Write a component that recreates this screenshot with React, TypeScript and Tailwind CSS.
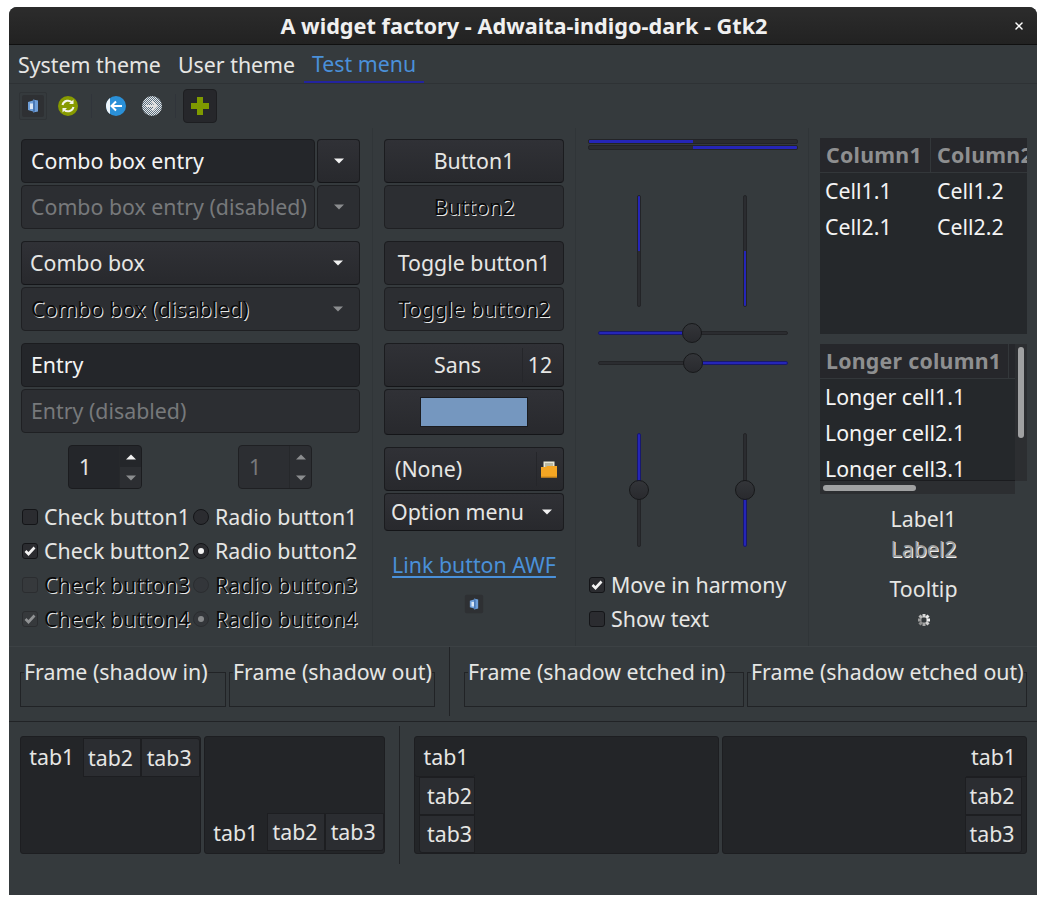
import React from "react";
import { X } from "lucide-react";

const widget =
  "rounded-[4px] border border-[#1b1c1f] border-b-[#141518] bg-linear-to-b from-[#303136] to-[#28292d]";
const widgetOff = "rounded-[4px] border border-[#1f2023] bg-[#2c2e32]";
const embossed = "text-[#0a0a0a] [text-shadow:1px_1px_0_#e8e8e8]";
const blueTrack = "border border-[#18186e] bg-[#2525b8]";
const darkTrack = "border border-[#232427] bg-[#2b2c30]";

function Caret({ off }: { off?: boolean }) {
  return (
    <svg width="10" height="6" viewBox="0 0 10 6">
      <path d="M0 0.500h10L5 5.500z" fill={off ? "#8b8d8f" : "#f2f2f2"} />
    </svg>
  );
}

function DocIcon({ box }: { box: number }) {
  return (
    <svg width={box} height={box} viewBox="0 0 24 24">
      <rect x="1" y="1" width="22" height="22" rx="2" fill="#2e3033" />
      <path d="M7 8l5-1.500v-1l5 1v11l-5 1v-1l-5-1.500z" fill="#6f9fd8" />
      <path d="M9 9.500h3v5.500h-3z" fill="#dbe7f5" />
      <path d="M12 6v12l2-0.500v-11z" fill="#4a78b4" />
    </svg>
  );
}

function Folder() {
  return (
    <svg width="16" height="17" viewBox="0 0 16 17">
      <rect x="2.500" y="0.500" width="11" height="10" fill="#e9e7d4" />
      <path d="M4 3h8M4 5h8" stroke="#8a8a70" strokeWidth="1" />
      <path d="M0 6h5l1-1h10v11.500H0z" fill="#f5a623" />
      <rect x="0" y="15.500" width="16" height="1" fill="#c9841a" />
    </svg>
  );
}

function Check({ on, off, label }: { on?: boolean; off?: boolean; label: string }) {
  return (
    <div className="flex h-[34px] items-center">
      <span
        className={`ml-px mr-[6px] flex h-4 w-4 shrink-0 items-center justify-center rounded-[3px] border ${
          off ? "border-[#2b2d30] bg-[#36393c]" : "border-[#141518] bg-[#2b2c30]"
        }`}
      >
        {on && (
          <svg width="12" height="10" viewBox="0 0 12 10">
            <path
              d="M1.500 5l3 3 6-6.500"
              fill="none"
              stroke={off ? "#909294" : "#f4f4f4"}
              strokeWidth="2.600"
            />
          </svg>
        )}
      </span>
      <span className={off ? embossed : ""}>{label}</span>
    </div>
  );
}

function Radio({ on, off, label }: { on?: boolean; off?: boolean; label: string }) {
  return (
    <div className="flex h-[34px] items-center">
      <span
        className={`mr-[6px] flex h-4 w-4 shrink-0 items-center justify-center rounded-full border ${
          off ? "border-[#2b2d30] bg-[#33363a]" : "border-[#141518] bg-[#2b2c30]"
        }`}
      >
        {on && <span className={`h-[6px] w-[6px] rounded-full ${off ? "bg-[#86888a]" : "bg-[#f4f4f4]"}`} />}
      </span>
      <span className={off ? embossed : ""}>{label}</span>
    </div>
  );
}

function Spin({ off }: { off?: boolean }) {
  return (
    <div className={`flex h-[44px] w-[74px] overflow-hidden ${off ? widgetOff : "rounded-[4px] border border-[#1b1c1f] bg-[#24262a]"}`}>
      <div className={`flex flex-1 items-center pl-[10px] ${off ? "text-[#77797b]" : ""}`}>1</div>
      <div className="flex w-[22px] flex-col border-l border-[#26282b]">
        <div className="flex h-[21px] items-center justify-center">
          <span className="rotate-180 leading-none">
            <Caret off={off} />
          </span>
        </div>
        <div className={`flex flex-1 items-center justify-center ${off ? "" : "bg-[#2c2e32]"}`}>
          <Caret off />
        </div>
      </div>
    </div>
  );
}

function Progress({ from, className }: { from: "start" | "end"; className: string }) {
  return (
    <div className={`flex overflow-hidden rounded-[2px] ${darkTrack} ${from === "end" ? "justify-end" : ""} ${className}`}>
      <div className="h-full w-1/2 bg-[#2525b8]" />
    </div>
  );
}

function VProgress({ from }: { from: "start" | "end" }) {
  return (
    <div className={`flex h-[112px] w-[4px] flex-col overflow-hidden rounded-[2px] ${darkTrack} ${from === "end" ? "justify-end" : ""}`}>
      <div className="h-[50%] bg-[#2525b8]" />
    </div>
  );
}

function Thumb({ className }: { className: string }) {
  return (
    <span className={`absolute h-5 w-5 rounded-full border border-[#17181a] bg-linear-to-b from-[#333539] to-[#292a2e] ${className}`} />
  );
}

function Frame({ label, className }: { label: string; className: string }) {
  return (
    <fieldset className={`h-[50px] border border-[#212326] ${className}`}>
      <legend className="ml-[3px] leading-[30px]">{label}</legend>
    </fieldset>
  );
}

function Tab({ label, className }: { label: string; className: string }) {
  return <div className={`flex items-center justify-center ${className}`}>{label}</div>;
}

const offTab = "border border-[#1d1e21] bg-[#2b2d31]";
const sheet = "h-[118px] rounded-[3px] border border-[#1d1e21] bg-[#232528]";

export default function App() {
  return (
    <div className="min-h-[905px] bg-white pl-[9px] pt-[7px] font-['Noto_Sans',sans-serif] text-[21.330px] leading-none text-[#e6e6e4]">
      <div className="flex h-[888px] w-[1028px] flex-col overflow-hidden rounded-t-[8px] bg-[#353a3d]">
        {/* Title bar */}
        <div className="relative flex h-[38px] shrink-0 items-center justify-center border-b border-[#101010] bg-linear-to-b from-[#2c2c2c] to-[#222222] pl-[2px] pt-px text-[21.700px] font-bold text-[#f0f0f0]">
          A widget factory - Adwaita-indigo-dark - Gtk2
          <X className="absolute right-[12px] top-[13px] h-[12px] w-[12px] text-white" strokeWidth={3} />
        </div>

        {/* Menu */}
        <div className="flex h-[39px] shrink-0 items-center border-b border-[#2e3235]">
          <div className="w-[161px] pl-[9px] pt-[2px]">System theme</div>
          <div className="w-[134px] pl-[8px] pt-[2px]">User theme</div>
          <div className="relative flex h-full w-[120px] items-center justify-center border-b-[2px] border-[#23239f] pt-[2px] text-[#4a90d9]">
            Test menu
          </div>
        </div>

        {/* Toolbar */}
        <div className="flex h-[44px] shrink-0 items-center pl-[10px]">
          <div className="flex h-[28px] w-[28px] items-center justify-center rounded-[2px] border border-[#2f3336]">
            <DocIcon box={24} />
          </div>
          <svg className="ml-[11px]" width="20" height="20" viewBox="0 0 20 20">
            <circle cx="10" cy="10" r="10" fill="#879a00" />
            <path d="M4.500 9a5.600 5.600 0 0 1 10-2M15.500 11a5.600 5.600 0 0 1-10 2" fill="none" stroke="#f4f4ea" strokeWidth="2" />
            <path d="M15.500 3.500v4.500h-4.500zM4.500 16.500v-4.500h4.500z" fill="#f4f4ea" />
          </svg>
          <div className="mx-[13px] h-[24px] w-px bg-[#30343a]" />
          <svg className="ml-px" width="20" height="20" viewBox="0 0 20 20">
            <circle cx="10" cy="10" r="10" fill="#2a90d8" />
            <path d="M0 10a10 10 0 0 1 4-8v16a10 10 0 0 1-4-8z" fill="#eef6fc" />
            <path d="M16 10H6M10 5.500L5.500 10l4.500 4.500" fill="none" stroke="#ffffff" strokeWidth="2" />
          </svg>
          <svg className="ml-[16px]" width="20" height="20" viewBox="0 0 20 20">
            <defs>
              <pattern id="dither" width="2" height="2" patternUnits="userSpaceOnUse">
                <rect width="2" height="2" fill="#5a6f80" />
                <rect width="1" height="1" fill="#e8e8e8" />
                <rect x="1" y="1" width="1" height="1" fill="#e8e8e8" />
              </pattern>
            </defs>
            <circle cx="10" cy="10" r="10" fill="url(#dither)" />
            <path d="M4 10h10M10 5.500l4.500 4.500-4.500 4.500" fill="none" stroke="#e0e0e0" strokeWidth="2" />
          </svg>
          <div className="mx-[13px] h-[24px] w-px bg-[#30343a]" />
          <div className="-ml-[6px] flex h-[34px] w-[34px] items-center justify-center rounded-[4px] border border-[#1d1e21] bg-[#26272b]">
            <svg width="18" height="18" viewBox="0 0 18 18">
              <path d="M6 0h6v6h6v6h-6v6H6v-6H0V6h6z" fill="#7f9a00" />
            </svg>
          </div>
        </div>

        {/* Main columns */}
        <div className="flex h-[518px] shrink-0">
          {/* Column 1 */}
          <div className="w-[364px] shrink-0 border-r border-[#303538] pl-[12px] pr-[12px] pt-[11px]">
            <div className="flex h-[44px] gap-[2px]">
              <div className="flex w-[294px] items-center rounded-[4px] border border-[#1b1c1f] bg-[#24262a] pl-[9px] text-[#f4f4f4]">
                Combo box entry
              </div>
              <div className={`flex w-[43px] items-center justify-center ${widget}`}>
                <Caret />
              </div>
            </div>
            <div className="mt-[2px] flex h-[44px] gap-[2px]">
              <div className={`flex w-[294px] items-center whitespace-nowrap pl-[9px] text-[#77797b] ${widgetOff}`}>
                Combo box entry (disabled)
              </div>
              <div className={`flex w-[43px] items-center justify-center ${widgetOff}`}>
                <Caret off />
              </div>
            </div>
            <div className={`mt-[12px] flex h-[44px] items-center justify-between pl-[8px] pr-[16px] ${widget}`}>
              Combo box
              <Caret />
            </div>
            <div className={`mt-[2px] flex h-[44px] items-center justify-between pl-[9px] pr-[16px] ${widgetOff}`}>
              <span className={embossed}>Combo box (disabled)</span>
              <Caret off />
            </div>
            <div className="mt-[12px] flex h-[44px] items-center rounded-[4px] border border-[#1b1c1f] bg-[#24262a] pl-[9px] text-[#f4f4f4]">
              Entry
            </div>
            <div className={`mt-[2px] flex h-[44px] items-center pl-[9px] text-[#77797b] ${widgetOff}`}>
              Entry (disabled)
            </div>
            <div className="mt-[12px] flex pl-[47px]">
              <Spin />
              <div className="ml-[96px]">
                <Spin off />
              </div>
            </div>
            <div className="mt-[11px] flex">
              <div className="w-[172px]">
                <Check label="Check button1" />
                <Check on label="Check button2" />
                <Check off label="Check button3" />
                <Check on off label="Check button4" />
              </div>
              <div>
                <Radio label="Radio button1" />
                <Radio on label="Radio button2" />
                <Radio off label="Radio button3" />
                <Radio on off label="Radio button4" />
              </div>
            </div>
          </div>

          {/* Column 2 */}
          <div className="w-[203px] shrink-0 border-r border-[#303538] pl-[11px] pr-[11px] pt-[11px]">
            <div className={`flex h-[44px] items-center justify-center ${widget}`}>Button1</div>
            <div className={`mt-[2px] flex h-[44px] items-center justify-center ${widgetOff}`}>
              <span className={embossed}>Button2</span>
            </div>
            <div className="mt-[12px] flex h-[44px] items-center justify-center rounded-[4px] border border-[#1b1c1f] bg-[#2a2b2f]">
              Toggle button1
            </div>
            <div className={`mt-[2px] flex h-[44px] items-center justify-center ${widgetOff}`}>
              <span className={embossed}>Toggle button2</span>
            </div>
            <div className={`mt-[12px] flex h-[44px] items-center ${widget}`}>
              <div className="flex-1 pl-[8px] text-center">Sans</div>
              <div className="flex h-[34px] w-[41px] items-center justify-center border-l border-[#25262a] pr-[6px]">12</div>
            </div>
            <div className={`mt-[2px] flex h-[46px] items-center justify-center ${widget}`}>
              <div className="h-[30px] w-[108px] border border-[#1b1c1f] bg-[#7597bf]" />
            </div>
            <div className={`mt-[12px] flex h-[44px] items-center ${widget}`}>
              <div className="flex-1 pl-[10px]">(None)</div>
              <div className="flex h-[34px] w-[27px] items-center justify-center border-l border-[#25262a] pr-[3px]">
                <Folder />
              </div>
            </div>
            <div className={`mt-[2px] flex h-[38px] items-center justify-between pl-[6px] pr-[11px] ${widget}`}>
              Option menu
              <Caret />
            </div>
            <div className="mt-[23px] text-center text-[#4a90d9] underline underline-offset-[3px]">Link button AWF</div>
            <div className="mt-[19px] flex justify-center">
              <DocIcon box={20} />
            </div>
          </div>

          {/* Column 3 */}
          <div className="w-[233px] shrink-0 border-r border-[#303538] pl-[12px] pr-[10px] pt-[11px]">
            <div className="flex flex-col gap-[1px]">
              <Progress from="start" className="h-[5px]" />
              <Progress from="end" className="h-[5px]" />
            </div>
            <div className="mt-[45px] flex h-[112px] gap-[102px] pl-[49px]">
              <VProgress from="start" />
              <VProgress from="end" />
            </div>
            <div className="mt-[11px] px-[10px]">
              <div className="relative flex h-[30px] items-center">
                <div className={`h-[4px] w-[94px] rounded-l-[2px] ${blueTrack}`} />
                <div className={`h-[4px] flex-1 rounded-r-[2px] ${darkTrack}`} />
                <Thumb className="left-[84px] top-[5px]" />
              </div>
              <div className="relative flex h-[30px] items-center">
                <div className={`h-[4px] w-[95px] rounded-l-[2px] ${darkTrack}`} />
                <div className={`h-[4px] flex-1 rounded-r-[2px] ${blueTrack}`} />
                <Thumb className="left-[85px] top-[5px]" />
              </div>
            </div>
            <div className="mt-[55px] flex h-[114px] gap-[102px] pl-[49px]">
              <div className="relative flex h-full w-[4px] flex-col">
                <div className={`h-[57px] rounded-t-[2px] ${blueTrack}`} />
                <div className={`flex-1 rounded-b-[2px] ${darkTrack}`} />
                <Thumb className="-left-[8px] top-[47px]" />
              </div>
              <div className="relative flex h-full w-[4px] flex-col">
                <div className={`h-[57px] rounded-t-[2px] ${darkTrack}`} />
                <div className={`flex-1 rounded-b-[2px] ${blueTrack}`} />
                <Thumb className="-left-[8px] top-[47px]" />
              </div>
            </div>
            <div className="mt-[21px]">
              <Check on label="Move in harmony" />
              <Check label="Show text" />
            </div>
          </div>

          {/* Column 4 */}
          <div className="min-w-0 flex-1 pl-[11px] pt-[10px]">
            <div className="h-[196px] w-[207px] overflow-hidden bg-[#25282b]">
              <div className="flex h-[35px] border-b border-[#33373a] bg-[#26272b] font-bold tracking-[0.25px] text-[#8e8f90]">
                <div className="flex w-[111px] shrink-0 items-center border-r border-[#33373a] pl-[6px]">Column1</div>
                <div className="flex items-center whitespace-nowrap pl-[6px]">Column2</div>
              </div>
              <div className="flex h-[36px] items-center text-[#f4f4f4]">
                <div className="w-[111px] pl-[5px]">Cell1.1</div>
                <div className="pl-[6px]">Cell1.2</div>
              </div>
              <div className="flex h-[36px] items-center text-[#f4f4f4]">
                <div className="w-[111px] pl-[5px]">Cell2.1</div>
                <div className="pl-[6px]">Cell2.2</div>
              </div>
            </div>

            <div className="mt-[10px] w-[207px]">
              <div className="flex h-[137px]">
                <div className="w-[195px] overflow-hidden border-b border-[#1b1c1f] bg-[#25282b]">
                  <div className="flex h-[35px] border-b border-[#33373a] bg-[#26272b] font-bold tracking-[0.25px] text-[#8e8f90]">
                    <div className="flex w-[189px] shrink-0 items-center border-r border-[#33373a] pl-[6px]">Longer column1</div>
                  </div>
                  <div className="flex h-[36px] items-center pl-[5px] text-[#f4f4f4]">Longer cell1.1</div>
                  <div className="flex h-[36px] items-center pl-[5px] text-[#f4f4f4]">Longer cell2.1</div>
                  <div className="flex h-[36px] items-center pl-[5px] text-[#f4f4f4]">Longer cell3.1</div>
                </div>
                <div className="w-[12px] bg-[#2c2e31] pl-[3px] pt-[3px]">
                  <div className="h-[91px] w-[6px] rounded-full bg-[#a0a1a2]" />
                </div>
              </div>
              <div className="h-[13px] w-[195px] bg-[#2c2e31] pl-[3px] pt-[4px]">
                <div className="h-[6px] w-[93px] rounded-full bg-[#a0a1a2]" />
              </div>
            </div>

            <div className="mt-[9px] flex w-[207px] flex-col items-center">
              <div className="flex h-[31px] items-center">Label1</div>
              <div className="flex h-[30px] items-center text-[#9b9c9c] [text-shadow:1px_1px_0_#f0f0f0]">Label2</div>
              <div className="mt-[10px] flex h-[30px] items-center">Tooltip</div>
              <svg className="mt-[9px]" width="14" height="14" viewBox="0 0 14 14">
                <g fill="none" strokeWidth="3">
                  <path d="M7 1v3.500" stroke="#d8d8d8" />
                  <path d="M11.500 2.500L9 5" stroke="#e8e8e8" />
                  <path d="M13 7H9.500" stroke="#f0f0f0" />
                  <path d="M11.500 11.500L9 9" stroke="#d0d0d0" />
                  <path d="M7 13V9.500" stroke="#a8a8a8" />
                  <path d="M2.500 11.500L5 9" stroke="#909090" />
                  <path d="M1 7h3.500" stroke="#9a9a9a" />
                  <path d="M2.500 2.500L5 5" stroke="#b8b8b8" />
                </g>
              </svg>
            </div>
          </div>
        </div>

        {/* Frames */}
        <div className="flex h-[76px] shrink-0 border-y border-t-[#3c4144] border-b-[#212326] pl-[11px]">
          <Frame label="Frame (shadow in)" className="mt-[10px] w-[206px]" />
          <Frame label="Frame (shadow out)" className="ml-[3px] mt-[10px] w-[206px]" />
          <div className="ml-[14px] h-[69px] w-px bg-[#212326]" />
          <Frame label="Frame (shadow etched in)" className="ml-[14px] mt-[10px] w-[280px]" />
          <Frame label="Frame (shadow etched out)" className="ml-[3px] mt-[10px] w-[280px]" />
        </div>

        {/* Notebooks */}
        <div className="flex flex-1 pl-[11px]">
          <div className={`mt-[14px] w-[181px] ${sheet}`}>
            <div className="flex">
              <Tab label="tab1" className="h-[39px] w-[62px] rounded-t-[3px]" />
              <Tab label="tab2" className={`mt-[1px] h-[39px] w-[59px] pr-[3px] ${offTab}`} />
              <Tab label="tab3" className={`mt-[1px] h-[39px] w-[59px] rounded-tr-[3px] pr-[3px] ${offTab}`} />
            </div>
          </div>
          <div className={`ml-[3px] mt-[14px] flex w-[181px] flex-col justify-end ${sheet}`}>
            <div className="flex">
              <Tab label="tab1" className="h-[39px] w-[62px] pt-px" />
              <Tab label="tab2" className={`mb-[2px] h-[38px] w-[59px] pr-[2px] ${offTab}`} />
              <Tab label="tab3" className={`mb-[2px] h-[38px] w-[59px] rounded-br-[3px] pr-[3px] ${offTab}`} />
            </div>
          </div>
          <div className="ml-[14px] mt-[4px] h-[138px] w-px bg-[#212326]" />
          <div className={`ml-[14px] mt-[14px] w-[305px] ${sheet}`}>
            <Tab label="tab1" className="h-[40px] w-[60px] rounded-b-[3px] border-b border-[#1d1e21] pl-[2px]" />
            <Tab label="tab2" className={`ml-[4px] h-[38px] w-[56px] pl-[5px] ${offTab}`} />
            <Tab label="tab3" className={`ml-[4px] h-[38px] w-[56px] rounded-bl-[3px] pl-[5px] ${offTab}`} />
          </div>
          <div className={`ml-[3px] mt-[14px] flex w-[305px] flex-col items-end ${sheet}`}>
            <Tab label="tab1" className="h-[40px] w-[60px] border-b border-[#1d1e21] pr-[5px]" />
            <Tab label="tab2" className={`mr-[4px] h-[38px] w-[57px] pr-[3px] ${offTab}`} />
            <Tab label="tab3" className={`mr-[4px] h-[38px] w-[57px] rounded-br-[3px] pr-[3px] ${offTab}`} />
          </div>
        </div>
      </div>
    </div>
  );
}
